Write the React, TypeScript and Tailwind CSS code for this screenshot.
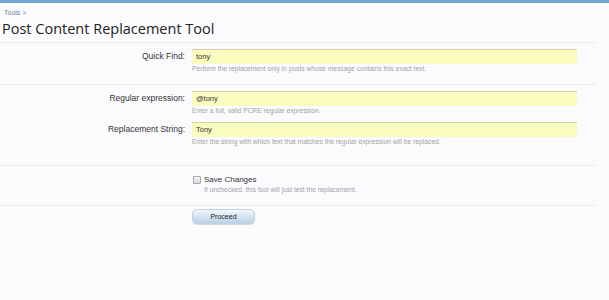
export default function App() {
  return (
    <div className="min-h-[300px] w-full bg-[#fbfbfe] font-['Liberation_Sans',sans-serif]">
      <div className="h-[3px] bg-[#72a4d6]" />
      <div className="px-[4px] pt-[5px] text-[7px] leading-[10px] text-[#6a85a8]">Tools &gt;</div>
      <h1 className="ml-[2px] mt-[1px] font-['Open_Sans',sans-serif] text-[14.5px] leading-[20px] text-[#222]">
        Post Content Replacement Tool
      </h1>

      <div className="mr-[13px] mt-[3px] border-t border-[#ececf0] pb-[10px]">
        <FieldRow top="pt-[6px]" label="Quick Find:" value="tony" hint="Perform the replacement only in posts whose message contains this exact text." />
      </div>
      <div className="mr-[13px] border-t border-[#ececf0] pb-[18px]">
        <FieldRow top="pt-[6px]" label="Regular expression:" value="@tony" hint="Enter a full, valid PCRE regular expression." />
        <FieldRow top="pt-[6px]" label="Replacement String:" value="Tony" hint="Enter the string with which text that matches the regular expression will be replaced." />
      </div>

      <div className="mr-[13px] border-t border-[#ececf0] pb-[10px] pt-[9px]">
        <div className="ml-[193px] flex items-center gap-[3px]">
          <span className="h-[8px] w-[8px] rounded-[1px] border border-[#a9a9b4] bg-gradient-to-b from-[#f6f6f8] to-[#d8d8de]" />
          <span className="text-[8px] leading-[10px] text-[#333]">Save Changes</span>
        </div>
        <div className="ml-[204px] text-[6.7px] leading-[10px] text-[#a0a0a8]">
          If unchecked, this tool will just test the replacement.
        </div>
      </div>

      <div className="mr-[13px] border-t border-[#ececf0] pt-[3px]">
        <button className="ml-[192px] flex h-[15px] w-[63px] items-center justify-center rounded-[5px] border border-[#c0d0e0] bg-gradient-to-b from-[#f2f7fb] to-[#b9d2e8] text-[7px] leading-[10px] text-[#222] shadow-[0_1px_1px_rgba(0,0,0,0.15)]">
          Proceed
        </button>
      </div>
    </div>
  );
}

function FieldRow(props: { top: string; label: string; value: string; hint: string }) {
  return (
    <div className={"flex " + props.top}>
      <div className="w-[185px] shrink-0 pt-[2px] text-right text-[8.5px] leading-[10px] text-[#333]">{props.label}</div>
      <div className="ml-[7px] flex-1">
        <div className="h-[15px] w-[385px] border-t border-[#d8cfa8] bg-[#fafcbf] pl-[4px] text-[7.5px] leading-[13px] text-[#333]">
          {props.value}
        </div>
        <div className="text-[6.7px] leading-[10px] text-[#a0a0a8]">{props.hint}</div>
      </div>
    </div>
  );
}
